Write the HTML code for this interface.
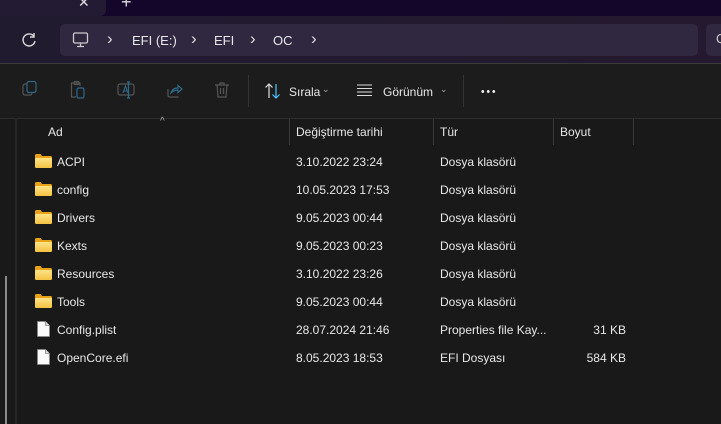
<!DOCTYPE html>
<html><head><meta charset="utf-8"><style>
*{margin:0;padding:0;box-sizing:border-box}
body{width:721px;height:424px;overflow:hidden;background:#191919;font-family:"Liberation Sans","DejaVu Sans",sans-serif;color:#fff;position:relative}
.abs{position:absolute}
.t{font-size:12px;color:#e8e8e8;white-space:nowrap}
.ch{font-size:17px;color:#ddd}
</style></head><body>
<div class="abs" style="left:0;top:0;width:721px;height:16px;background:#14062a"></div>
<div class="abs" style="left:0;top:0;width:106px;height:16px;background:#221b33;border-bottom-right-radius:6px"></div>
<div class="abs" style="left:78px;top:-6px;color:#ddd;font-size:14px">✕</div>
<div class="abs" style="left:121px;top:-8px;color:#ddd;font-size:18px">+</div>
<div class="abs" style="left:0;top:16px;width:721px;height:47px;background:linear-gradient(90deg,#211b30,#24192e)"></div>
<svg class="abs" style="left:20px;top:31px" width="18" height="18" viewBox="0 0 18 18"><path d="M14 5.5A6 6 0 1 0 15 10" fill="none" stroke="#ddd" stroke-width="1.4"/><path d="M14 2v4h-4" fill="none" stroke="#ddd" stroke-width="1.4"/></svg>
<div class="abs" style="left:60px;top:24px;width:638px;height:32px;background:#302840;border-radius:5px"></div>
<div class="abs" style="left:706px;top:24px;width:30px;height:32px;background:#302840;border-radius:5px"></div>
<div class="abs" style="left:716px;top:31px;color:#ccc;font-size:13px">Q</div>
<svg class="abs" style="left:72px;top:32px" width="18" height="16" viewBox="0 0 18 16"><rect x="1.5" y="1" width="14" height="10" rx="1.5" fill="none" stroke="#ccc" stroke-width="1.3"/><path d="M5 14.5h7M8.5 11v3.5" stroke="#ccc" stroke-width="1.3"/></svg>
<div class="abs ch" style="left:107px;top:29px">›</div>
<div class="abs t" style="left:132px;top:33px;font-size:13px">EFI (E:)</div>
<div class="abs ch" style="left:191px;top:29px">›</div>
<div class="abs t" style="left:214px;top:33px;font-size:13px">EFI</div>
<div class="abs ch" style="left:250px;top:29px">›</div>
<div class="abs t" style="left:273px;top:33px;font-size:13px">OC</div>
<div class="abs ch" style="left:311px;top:29px">›</div>
<div class="abs" style="left:0;top:63px;width:721px;height:1px;background:#3a3a3a"></div>
<div class="abs" style="left:0;top:64px;width:721px;height:54px;background:#1c1c1c"></div>
<svg class="abs" style="left:20px;top:80px" width="20" height="20" viewBox="0 0 20 20"><rect x="3" y="4" width="9" height="11" rx="2" fill="none" stroke="#555" stroke-width="1.2"/><rect x="7" y="1.5" width="9" height="11" rx="2" fill="#1c1c1c" stroke="#2c6a8c" stroke-width="1.2"/></svg>
<svg class="abs" style="left:68px;top:80px" width="20" height="20" viewBox="0 0 20 20"><path d="M5 3H3.5v14H8" fill="none" stroke="#555" stroke-width="1.2"/><path d="M5 3h7v3" fill="none" stroke="#555" stroke-width="1.2"/><rect x="6" y="1.5" width="5" height="3" rx="1" fill="none" stroke="#555" stroke-width="1.2"/><rect x="9" y="8" width="7" height="10" rx="1.5" fill="none" stroke="#2c6a8c" stroke-width="1.2"/></svg>
<svg class="abs" style="left:116px;top:80px" width="20" height="20" viewBox="0 0 20 20"><rect x="2" y="4" width="16" height="11" rx="2" fill="none" stroke="#555" stroke-width="1.2"/><path d="M7 13l2.5-7 2.5 7M8 11h3" fill="none" stroke="#2c6a8c" stroke-width="1.1"/><path d="M12.5 2v16M11 2h3M11 18h3" stroke="#2c6a8c" stroke-width="1.2"/></svg>
<svg class="abs" style="left:164px;top:80px" width="20" height="20" viewBox="0 0 20 20"><path d="M4 9v6.5a1.5 1.5 0 0 0 1.5 1.5h9" fill="none" stroke="#555" stroke-width="1.2"/><path d="M7 13c1-4 4-5 7-5V5.5L18 9l-4 3.5V10c-3 0-5 1-7 3z" fill="none" stroke="#2c6a8c" stroke-width="1.2"/></svg>
<svg class="abs" style="left:212px;top:80px" width="20" height="20" viewBox="0 0 20 20"><path d="M3 5h14M8 5V3h4v2M5 5l1 12h8l1-12M8.5 8v6M11.5 8v6" fill="none" stroke="#555" stroke-width="1.2"/></svg>
<div class="abs" style="left:248px;top:75px;width:1px;height:32px;background:#333"></div>
<svg class="abs" style="left:264px;top:82px" width="18" height="18" viewBox="0 0 18 18"><path d="M5 16V2M1.5 5.5L5 2l3.5 3.5" fill="none" stroke="#ddd" stroke-width="1.2"/><path d="M12 2v14M8.5 12.5L12 16l3.5-3.5" fill="none" stroke="#4cc2ff" stroke-width="1.2"/></svg>
<div class="abs t" style="left:289px;top:85px">Sırala</div>
<div class="abs" style="left:322px;top:84px;color:#aaa;font-size:9px">⌄</div>
<svg class="abs" style="left:357px;top:84px" width="16" height="12" viewBox="0 0 16 12"><path d="M0 1h15M0 4.5h15M0 8h15M0 11.5h15" stroke="#ddd" stroke-width="1"/></svg>
<div class="abs t" style="left:383px;top:85px">Görünüm</div>
<div class="abs" style="left:440px;top:84px;color:#aaa;font-size:9px">⌄</div>
<div class="abs" style="left:463px;top:75px;width:1px;height:32px;background:#333"></div>
<div class="abs" style="left:480px;top:90px;width:16px;height:3px;background:radial-gradient(circle,#eee 1.3px,transparent 1.6px) 0 0/5.5px 3px repeat-x"></div>
<div class="abs" style="left:0;top:118px;width:721px;height:1px;background:#2e2e2e"></div>
<div class="abs" style="left:15px;top:118px;width:2px;height:306px;background:#262626"></div>
<div class="abs" style="left:5px;top:276px;width:2px;height:148px;background:#8a8a8a"></div>
<div class="abs" style="left:160px;top:116px;color:#aaa;font-size:10px">^</div>
<div class="abs t" style="left:48px;top:125px">Ad</div>
<div class="abs" style="left:289px;top:119px;width:1px;height:26px;background:#3a3a3a"></div>
<div class="abs t" style="left:296px;top:125px">Değiştirme tarihi</div>
<div class="abs" style="left:433px;top:119px;width:1px;height:26px;background:#3a3a3a"></div>
<div class="abs t" style="left:440px;top:125px">Tür</div>
<div class="abs" style="left:553px;top:119px;width:1px;height:26px;background:#3a3a3a"></div>
<div class="abs t" style="left:560px;top:125px">Boyut</div>
<div class="abs" style="left:633px;top:119px;width:1px;height:26px;background:#3a3a3a"></div>
<svg width="0" height="0" style="position:absolute"><defs><linearGradient id="fg" x1="0" y1="0" x2="0" y2="1"><stop offset="0" stop-color="#ffe38a"/><stop offset="1" stop-color="#f5c242"/></linearGradient></defs></svg>

<div class="abs" style="left:35px;top:154px"><svg width="17" height="14" viewBox="0 0 17 14"><path d="M0 1.5A1.5 1.5 0 0 1 1.5 0h4l1.5 2h8.5A1.5 1.5 0 0 1 17 3.5V12.5A1.5 1.5 0 0 1 15.5 14h-14A1.5 1.5 0 0 1 0 12.5z" fill="#e8a317"/><rect x="0" y="4" width="17" height="10" rx="1.2" fill="url(#fg)"/></svg></div>
<div class="abs t" style="left:57px;top:155px">ACPI</div><div class="abs t" style="left:296px;top:155px">3.10.2022 23:24</div><div class="abs t" style="left:440px;top:155px">Dosya klasörü</div>

<div class="abs" style="left:35px;top:182px"><svg width="17" height="14" viewBox="0 0 17 14"><path d="M0 1.5A1.5 1.5 0 0 1 1.5 0h4l1.5 2h8.5A1.5 1.5 0 0 1 17 3.5V12.5A1.5 1.5 0 0 1 15.5 14h-14A1.5 1.5 0 0 1 0 12.5z" fill="#e8a317"/><rect x="0" y="4" width="17" height="10" rx="1.2" fill="url(#fg)"/></svg></div>
<div class="abs t" style="left:57px;top:183px">config</div><div class="abs t" style="left:296px;top:183px">10.05.2023 17:53</div><div class="abs t" style="left:440px;top:183px">Dosya klasörü</div>

<div class="abs" style="left:35px;top:210px"><svg width="17" height="14" viewBox="0 0 17 14"><path d="M0 1.5A1.5 1.5 0 0 1 1.5 0h4l1.5 2h8.5A1.5 1.5 0 0 1 17 3.5V12.5A1.5 1.5 0 0 1 15.5 14h-14A1.5 1.5 0 0 1 0 12.5z" fill="#e8a317"/><rect x="0" y="4" width="17" height="10" rx="1.2" fill="url(#fg)"/></svg></div>
<div class="abs t" style="left:57px;top:211px">Drivers</div><div class="abs t" style="left:296px;top:211px">9.05.2023 00:44</div><div class="abs t" style="left:440px;top:211px">Dosya klasörü</div>

<div class="abs" style="left:35px;top:238px"><svg width="17" height="14" viewBox="0 0 17 14"><path d="M0 1.5A1.5 1.5 0 0 1 1.5 0h4l1.5 2h8.5A1.5 1.5 0 0 1 17 3.5V12.5A1.5 1.5 0 0 1 15.5 14h-14A1.5 1.5 0 0 1 0 12.5z" fill="#e8a317"/><rect x="0" y="4" width="17" height="10" rx="1.2" fill="url(#fg)"/></svg></div>
<div class="abs t" style="left:57px;top:239px">Kexts</div><div class="abs t" style="left:296px;top:239px">9.05.2023 00:23</div><div class="abs t" style="left:440px;top:239px">Dosya klasörü</div>

<div class="abs" style="left:35px;top:266px"><svg width="17" height="14" viewBox="0 0 17 14"><path d="M0 1.5A1.5 1.5 0 0 1 1.5 0h4l1.5 2h8.5A1.5 1.5 0 0 1 17 3.5V12.5A1.5 1.5 0 0 1 15.5 14h-14A1.5 1.5 0 0 1 0 12.5z" fill="#e8a317"/><rect x="0" y="4" width="17" height="10" rx="1.2" fill="url(#fg)"/></svg></div>
<div class="abs t" style="left:57px;top:267px">Resources</div><div class="abs t" style="left:296px;top:267px">3.10.2022 23:26</div><div class="abs t" style="left:440px;top:267px">Dosya klasörü</div>

<div class="abs" style="left:35px;top:294px"><svg width="17" height="14" viewBox="0 0 17 14"><path d="M0 1.5A1.5 1.5 0 0 1 1.5 0h4l1.5 2h8.5A1.5 1.5 0 0 1 17 3.5V12.5A1.5 1.5 0 0 1 15.5 14h-14A1.5 1.5 0 0 1 0 12.5z" fill="#e8a317"/><rect x="0" y="4" width="17" height="10" rx="1.2" fill="url(#fg)"/></svg></div>
<div class="abs t" style="left:57px;top:295px">Tools</div><div class="abs t" style="left:296px;top:295px">9.05.2023 00:44</div><div class="abs t" style="left:440px;top:295px">Dosya klasörü</div>

<div class="abs" style="left:37px;top:321px"><svg width="13" height="16" viewBox="0 0 13 16"><path d="M0.5 0.5h8l4 4v11h-12z" fill="#fafafa" stroke="#888" stroke-width="0.8"/><path d="M8.5 0.5v4h4" fill="#ddd" stroke="#888" stroke-width="0.8"/></svg></div>
<div class="abs t" style="left:57px;top:323px">Config.plist</div><div class="abs t" style="left:296px;top:323px">28.07.2024 21:46</div><div class="abs t" style="left:440px;top:323px">Properties file Kay...</div><div class="abs t" style="left:560px;top:323px;width:66px;text-align:right">31 KB</div>

<div class="abs" style="left:37px;top:349px"><svg width="13" height="16" viewBox="0 0 13 16"><path d="M0.5 0.5h8l4 4v11h-12z" fill="#fafafa" stroke="#888" stroke-width="0.8"/><path d="M8.5 0.5v4h4" fill="#ddd" stroke="#888" stroke-width="0.8"/></svg></div>
<div class="abs t" style="left:57px;top:351px">OpenCore.efi</div><div class="abs t" style="left:296px;top:351px">8.05.2023 18:53</div><div class="abs t" style="left:440px;top:351px">EFI Dosyası</div><div class="abs t" style="left:560px;top:351px;width:66px;text-align:right">584 KB</div>
</body></html>
